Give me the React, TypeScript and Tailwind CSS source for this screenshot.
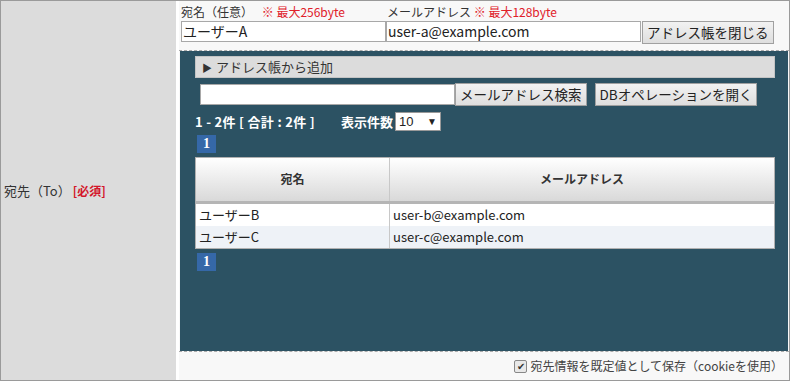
const font = { fontFamily: '"Noto Sans CJK JP", "Noto Sans", sans-serif' };

function Pager() {
  return (
    <div className="ml-[2px] flex h-[18px] w-[19px] items-center justify-center bg-[#3568a8] text-[14px] font-bold leading-none text-white" style={{ fontFamily: '"Liberation Serif", serif' }}>
      1
    </div>
  );
}

function Btn({ children, className = '' }: { children: React.ReactNode; className?: string }) {
  return (
    <button className={`flex h-[23px] items-center border border-[#a0a0a0] bg-gradient-to-b from-[#f2f2f2] to-[#dedede] px-[4px] text-[13.5px] leading-none text-[#222] ${className}`}>
      {children}
    </button>
  );
}

export default function App() {
  return (
    <div className="flex h-[381px] w-[790px] border border-[#9a9a9a] text-[#333]" style={font}>
      <div className="flex w-[178px] shrink-0 items-center border-r-[3px] border-white bg-[#dcdcdc] pl-[3px] text-[13px]">
        <span>宛先（To）</span>
        <span className="ml-[2px] text-[12px] font-bold text-[#d3162a]">[必須]</span>
      </div>
      <div className="flex flex-1 flex-col bg-[#f8f8f8]">
        <div className="flex pl-[2px] pt-[2px] text-[12px] leading-[17px]">
          <div className="w-[206px]">
            宛名（任意） <span className="ml-[6px] text-[#e0202a]">※ 最大256byte</span>
          </div>
          <div>
            メールアドレス <span className="text-[#e0202a]">※ 最大128byte</span>
          </div>
        </div>
        <div className="mt-[1px] flex items-start pl-[2px]">
          <div className="flex h-[21px] w-[205px] items-center border border-[#a8a8a8] bg-white px-[1px] text-[14px] text-[#222]">ユーザーA</div>
          <div className="flex h-[21px] w-[255px] items-center border border-[#a8a8a8] bg-white px-[1px] text-[14px] text-[#222]">user-a@example.com</div>
          <Btn className="ml-[1px]">アドレス帳を閉じる</Btn>
        </div>
        <div className="mt-[6px] flex h-[302px] flex-col border-y border-dashed border-[#aaa] bg-[#f8f8f8] pl-[1px] pr-[1px]">
          <div className="flex flex-1 flex-col bg-[#2c5263] pb-[6px] pl-[15px] pr-[13px] pt-[5px]">
            <div className="flex h-[22px] items-center border border-[#c4c4c4] bg-[#dcdcdc] pl-[6px] text-[13px] text-[#333]">
              <span className="mr-[4px] text-[10px]">▶</span>アドレス帳から追加
            </div>
            <div className="mt-[5px] flex items-center pl-[5px]">
              <div className="h-[21px] w-[255px] border border-[#a8a8a8] bg-white"></div>
              <Btn>メールアドレス検索</Btn>
              <Btn className="ml-[8px]">DBオペレーションを開く</Btn>
            </div>
            <div className="mt-[6px] flex items-center text-[13px] text-white">
              <span className="w-[146px] font-bold tracking-[0.3px]">1 - 2件 [ 合計 : 2件 ]</span>
              <span className="font-bold">表示件数</span>
              <div className="ml-[2px] flex h-[19px] w-[46px] items-center justify-between border border-[#999] bg-white px-[3px] text-[13px] text-[#222]" style={{ fontFamily: '"Liberation Sans", sans-serif' }}>
                <span>10</span>
                <span className="text-[10px]">▼</span>
              </div>
            </div>
            <div className="mt-[3px]"><Pager /></div>
            <div className="mt-[4px] border border-[#b0b0b0] bg-white">
              <div className="grid h-[46px] grid-cols-[194px_1fr] border-b-[3px] border-[#b5b5b5] bg-gradient-to-b from-white to-[#d9d9d9] text-[12px] font-bold text-[#333]">
                <div className="flex items-center justify-center border-r border-[#c8c8c8]">宛名</div>
                <div className="flex items-center justify-center">メールアドレス</div>
              </div>
              <div className="grid h-[22px] grid-cols-[194px_1fr] text-[13px] text-[#222]">
                <div className="flex items-center border-r border-[#c8c8c8] pl-[3px]">ユーザーB</div>
                <div className="flex items-center pl-[3px]">user-b@example.com</div>
              </div>
              <div className="grid h-[22px] grid-cols-[194px_1fr] bg-[#eef2f7] text-[13px] text-[#222]">
                <div className="flex items-center border-r border-[#c8c8c8] pl-[3px]">ユーザーC</div>
                <div className="flex items-center pl-[3px]">user-c@example.com</div>
              </div>
            </div>
            <div className="mt-[4px]"><Pager /></div>
          </div>
        </div>
        <div className="flex flex-1 items-center justify-end pr-[6px] text-[12px] text-[#444]">
          <span className="mr-[3px] flex h-[13px] w-[13px] items-center justify-center rounded-[2px] border border-[#888] bg-[#e8e8e8] text-[10px] leading-none text-[#333]">✔</span>
          宛先情報を既定値として保存（cookieを使用）
        </div>
      </div>
    </div>
  );
}
